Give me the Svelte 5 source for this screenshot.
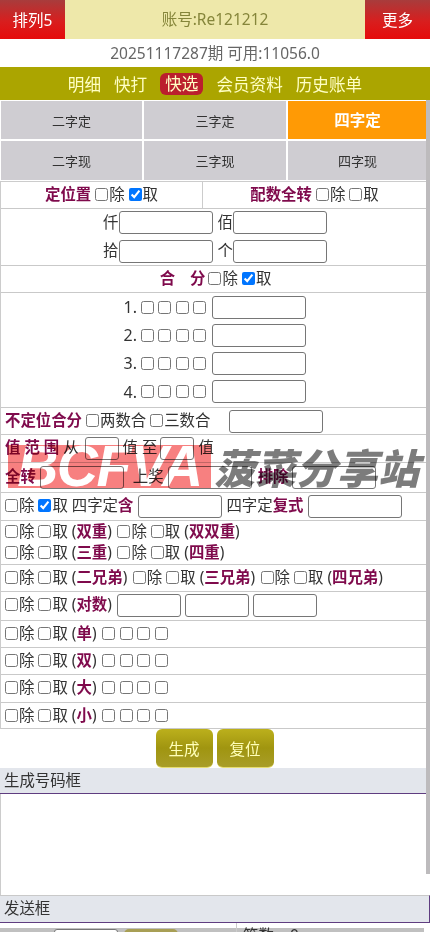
<script>
  const tabs = [
    { label: "二字定" },
    { label: "三字定" },
    { label: "四字定", active: true },
    { label: "二字现" },
    { label: "三字现" },
    { label: "四字现" },
  ];
  const navItems = ["明细", "快打", "快选", "会员资料", "历史账单"];
  const heRows = ["1.", "2.", "3.", "4."];
  const oddRows = ["单", "双", "大", "小"];
</script>

{#snippet pick(qu = false)}
  <label class="pick"><input type="checkbox" />除</label>
  <label class="pick"><input type="checkbox" checked={qu} />取</label>
{/snippet}

{#snippet tag(name)}
  <span class="tag">(<b>{name}</b>)</span>
{/snippet}

{#snippet four()}
  <span class="four">
    <input type="checkbox" /><input type="checkbox" /><input type="checkbox" /><input type="checkbox" />
  </span>
{/snippet}

<div class="page">
  <header class="top">
    <button class="top__btn top__btn--left">排列5</button>
    <div class="top__account">账号:Re121212</div>
    <button class="top__btn top__btn--right">更多</button>
  </header>
  <div class="period">20251117287期 可用:11056.0</div>
  <nav class="nav">
    {#each navItems as item}
      <span class="nav__item" class:nav__item--on={item === "快选"}>{item}</span>
    {/each}
  </nav>

  <div class="tabs">
    {#each tabs as tab}
      <div class="tab" class:tab--active={tab.active}>{tab.label}</div>
    {/each}
  </div>

  <div class="form">
    <div class="row row--split">
      <div class="cell cell--left"><b>定位置</b> {@render pick(true)}</div>
      <div class="cell cell--right"><b>配数全转</b> {@render pick()}</div>
    </div>

    <div class="row row--places">
      <div class="place-line">
        <span class="place">仟<input class="box" /></span>
        <span class="place">佰<input class="box" /></span>
      </div>
      <div class="place-line">
        <span class="place">拾<input class="box" /></span>
        <span class="place">个<input class="box" /></span>
      </div>
    </div>

    <div class="row row--center"><b>合</b><b class="fen">分</b>{@render pick(true)}</div>

    <div class="row row--he">
      {#each heRows as no}
        <div class="he-line"><span class="he-no">{no}</span>{@render four()}<input class="box" /></div>
      {/each}
    </div>

    <div class="row row--h27">
      <b>不定位合分</b>
      <label class="pick"><input type="checkbox" />两数合</label>
      <label class="pick"><input type="checkbox" />三数合</label>
      <input class="box box--gap" />
    </div>

    <div class="row row--h28">
      <b>值 范 围</b> 从 <input class="box box--tiny box--from" /> 值 至 <input class="box box--tiny box--to" /> 值
    </div>

    <div class="row row--h29">
      <b>全转</b> <input class="box box--mid" />
      <span class="prize">上奖</span> <input class="box box--mid" />
      <b class="except">排除</b> <input class="box box--mid" />
    </div>

    <div class="row row--h28">
      {@render pick(true)} 四字定<b>含</b> <input class="box box--mid box--he" /> 四字定<b>复式</b> <input class="box box--fu" />
    </div>

    <div class="row row--double">
      <div class="dbl-line">{@render pick()} {@render tag("双重")} {@render pick()} {@render tag("双双重")}</div>
      <div class="dbl-line">{@render pick()} {@render tag("三重")} {@render pick()} {@render tag("四重")}</div>
    </div>

    <div class="row">
      {@render pick()} {@render tag("二兄弟")} {@render pick()} {@render tag("三兄弟")} {@render pick()} {@render tag("四兄弟")}
    </div>

    <div class="row row--pairs">
      {@render pick()} {@render tag("对数")} <input class="box box--small" /> <input class="box box--small" /> <input class="box box--small" />
    </div>

    {#each oddRows as name, i}
      <div class="row" class:row--h28={i === 2} class:row--last={i === 3}>{@render pick()} {@render tag(name)} {@render four()}</div>
    {/each}
  </div>

  <div class="actions">
    <button class="action">生成</button>
    <button class="action">复位</button>
  </div>

  <div class="panel-title">生成号码框</div>
  <div class="output"></div>
  <div class="panel-title panel-title--send">发送框</div>

  <div class="send">
    <div class="send__left">
      <input class="box send__input" />
      <button class="send__btn"></button>
    </div>
    <div class="send__right">笔数: &nbsp; 0</div>
  </div>

  <div class="scrollbar"></div>

  <div class="mark">
    <div class="mark__logo">BCFVA</div>
    <div class="mark__name">菠菜分享站</div>
  </div>
</div>

<style>
  :global(body) {
    margin: 0;
    background: #fff;
  }

  .page {
    position: relative;
    width: 430px;
    height: 932px;
    overflow: hidden;
    font-family: "Noto Sans", "Noto Sans CJK SC", sans-serif;
    font-size: 15.4px;
    color: #333;
  }

  .top {
    display: flex;
    height: 39px;
    background: #eee8aa;
  }

  .top__btn {
    width: 65px;
    border: 0;
    padding: 0;
    color: #fff;
    font: inherit;
    font-size: 15.5px;
    background: linear-gradient(#a83c3c, #d81e1e 55%, #e60b0b);
  }

  .top__account {
    flex: 1;
    text-align: center;
    line-height: 38px;
    color: #85853a;
    font-size: 15.5px;
  }

  .period {
    height: 28px;
    line-height: 28px;
    text-align: center;
    color: #666;
    font-size: 15.5px;
  }

  .nav {
    display: flex;
    justify-content: center;
    align-items: center;
    gap: 13px;
    height: 33px;
    background: #aba500;
    color: #ffffc4;
    font-size: 16.6px;
  }

  .nav__item--on {
    background: #bb1f2d;
    border-radius: 6px;
    padding: 0 5px;
    line-height: 22px;
  }

  .tabs {
    display: grid;
    grid-template-columns: 141px 142px 139px;
    grid-template-rows: 38px 39px;
    gap: 2px;
    padding: 1px 0 1px 1px;
  }

  .tab {
    display: flex;
    align-items: center;
    justify-content: center;
    background: #cfcdd2;
    color: #333;
    font-size: 13px;
  }

  .tab--active {
    background: #ff9a05;
    color: #fff;
    font-size: 15.5px;
    font-weight: 700;
    padding-bottom: 2px;
    box-sizing: border-box;
  }

  .form {
    width: 426px;
    border-left: 1px solid #ccc;
    border-top: 1px solid #ccc;
    box-sizing: border-box;
  }

  .row {
    box-sizing: border-box;
    height: 27px;
    line-height: 26px;
    padding-left: 4px;
    border-bottom: 1px solid #c9c9c9;
    white-space: nowrap;
  }

  .row--h27 {
    height: 27.5px;
  }

  .row--h28 {
    height: 28px;
  }

  .row--h29 {
    height: 29.5px;
    line-height: 27px;
  }

  .row--last {
    height: 26.5px;
  }

  b {
    color: #7f0a4c;
    font-weight: 700;
  }

  .pick input,
  .four input {
    width: 13px;
    height: 13px;
    margin: 0 1px 0 0;
    vertical-align: -1px;
  }

  .four {
    display: inline-flex;
    gap: 3.5px;
    vertical-align: -1px;
    margin-right: 1px;
  }

  .tag {
    margin-right: 1.5px;
  }

  .box {
    box-sizing: border-box;
    width: 94px;
    height: 23px;
    padding: 0;
    border: 1px solid #767676;
    border-radius: 3px;
    background: transparent;
    vertical-align: middle;
  }

  .box--gap {
    margin-left: 15px;
  }

  .box--tiny {
    width: 34px;
  }

  .box--from {
    margin-left: 2px;
  }

  .box--to {
    margin-left: -1px;
  }

  .box--mid {
    width: 84px;
  }

  .box--he {
    margin-left: 1px;
  }

  .box--fu {
    margin-left: 1px;
  }

  .box--small {
    width: 64px;
  }

  .prize {
    margin-left: 5px;
  }

  .except {
    margin-left: 2px;
  }

  .row--split {
    display: grid;
    grid-template-columns: 201px 1fr;
    padding-left: 0;
  }

  .cell {
    text-align: center;
  }

  .cell--right {
    border-left: 1px solid #ccc;
  }

  .row--places {
    height: 57px;
    padding: 1px 0 0;
  }

  .place-line {
    display: flex;
    justify-content: center;
    gap: 5px;
    height: 28.5px;
    padding-left: 3px;
  }

  .place {
    display: flex;
    align-items: center;
    height: 25px;
  }

  .row--center {
    text-align: center;
    padding: 0 0 0 4px;
  }

  .fen {
    margin: 0 3px 0 15px;
  }

  .row--he {
    height: 114.5px;
    padding: 0;
  }

  .he-line {
    display: flex;
    justify-content: center;
    align-items: center;
    gap: 4px;
    height: 28.2px;
    padding-left: 3px;
  }

  .he-no {
    font-size: 16px;
  }

  .row--double {
    height: 44px;
  }

  .dbl-line {
    height: 21px;
    line-height: 21px;
  }

  .row--pairs {
    height: 29px;
  }

  .actions {
    display: flex;
    justify-content: center;
    gap: 4px;
    height: 39px;
    padding-right: 1px;
    box-sizing: border-box;
  }

  .action {
    width: 57px;
    height: 39px;
    border: 0;
    border-bottom: 1px solid #e6dd70;
    border-radius: 6px;
    padding: 0;
    background: linear-gradient(#bcb01c, #a09510 50%, #a89d28);
    color: #ffffb8;
    font: inherit;
    font-size: 15.5px;
  }

  .panel-title {
    box-sizing: border-box;
    height: 26px;
    line-height: 25px;
    padding-left: 4px;
    background: #e3e6ec;
    border-bottom: 1px solid #5f3d80;
    border-right: 1px solid #5f3d80;
    color: #333;
    font-size: 15.4px;
  }

  .panel-title--send {
    height: 28px;
    border-top: 1px solid #c9c9c9;
    line-height: 26px;
  }

  .output {
    height: 100.5px;
    border-left: 1px solid #ccc;
  }

  .send {
    display: flex;
    height: 20px;
  }

  .send__left {
    display: flex;
    gap: 6px;
    box-sizing: border-box;
    width: 237px;
    padding: 6px 0 0 54px;
    background: linear-gradient(#fff 5px, #c0c0c0 5px);
    border-right: 1px solid #ccc;
  }

  .send__input {
    width: 64px;
    background: #fff;
  }

  .send__btn {
    width: 54px;
    height: 24px;
    border: 0;
    border-radius: 5px 5px 0 0;
    background: #a89f55;
  }

  .send__right {
    width: 187px;
    padding-left: 6px;
    box-sizing: border-box;
    line-height: 25px;
    background: linear-gradient(#fff 5px, #c0c0c0 5px);
  }

  .scrollbar {
    position: absolute;
    top: 100px;
    right: 0;
    width: 4px;
    height: 774px;
    background: #bdbbbd;
  }

  .mark {
    position: absolute;
    top: 445px;
    left: 8px;
    display: flex;
    gap: 3px;
    align-items: center;
    height: 43px;
    pointer-events: none;
    mix-blend-mode: multiply;
  }

  .mark__logo {
    width: 203px;
    height: 43px;
    background: #f78080;
    color: #fff;
    font-family: "Liberation Sans", sans-serif;
    font-size: 57px;
    font-style: italic;
    font-weight: 700;
    line-height: 43px;
    text-align: center;
    letter-spacing: -1.5px;
  }

  .mark__name {
    color: #7c7c7c;
    font-family: "Noto Sans CJK SC", sans-serif;
    font-size: 41px;
    font-style: italic;
    font-weight: 900;
    line-height: 43px;
    white-space: nowrap;
  }
</style>
